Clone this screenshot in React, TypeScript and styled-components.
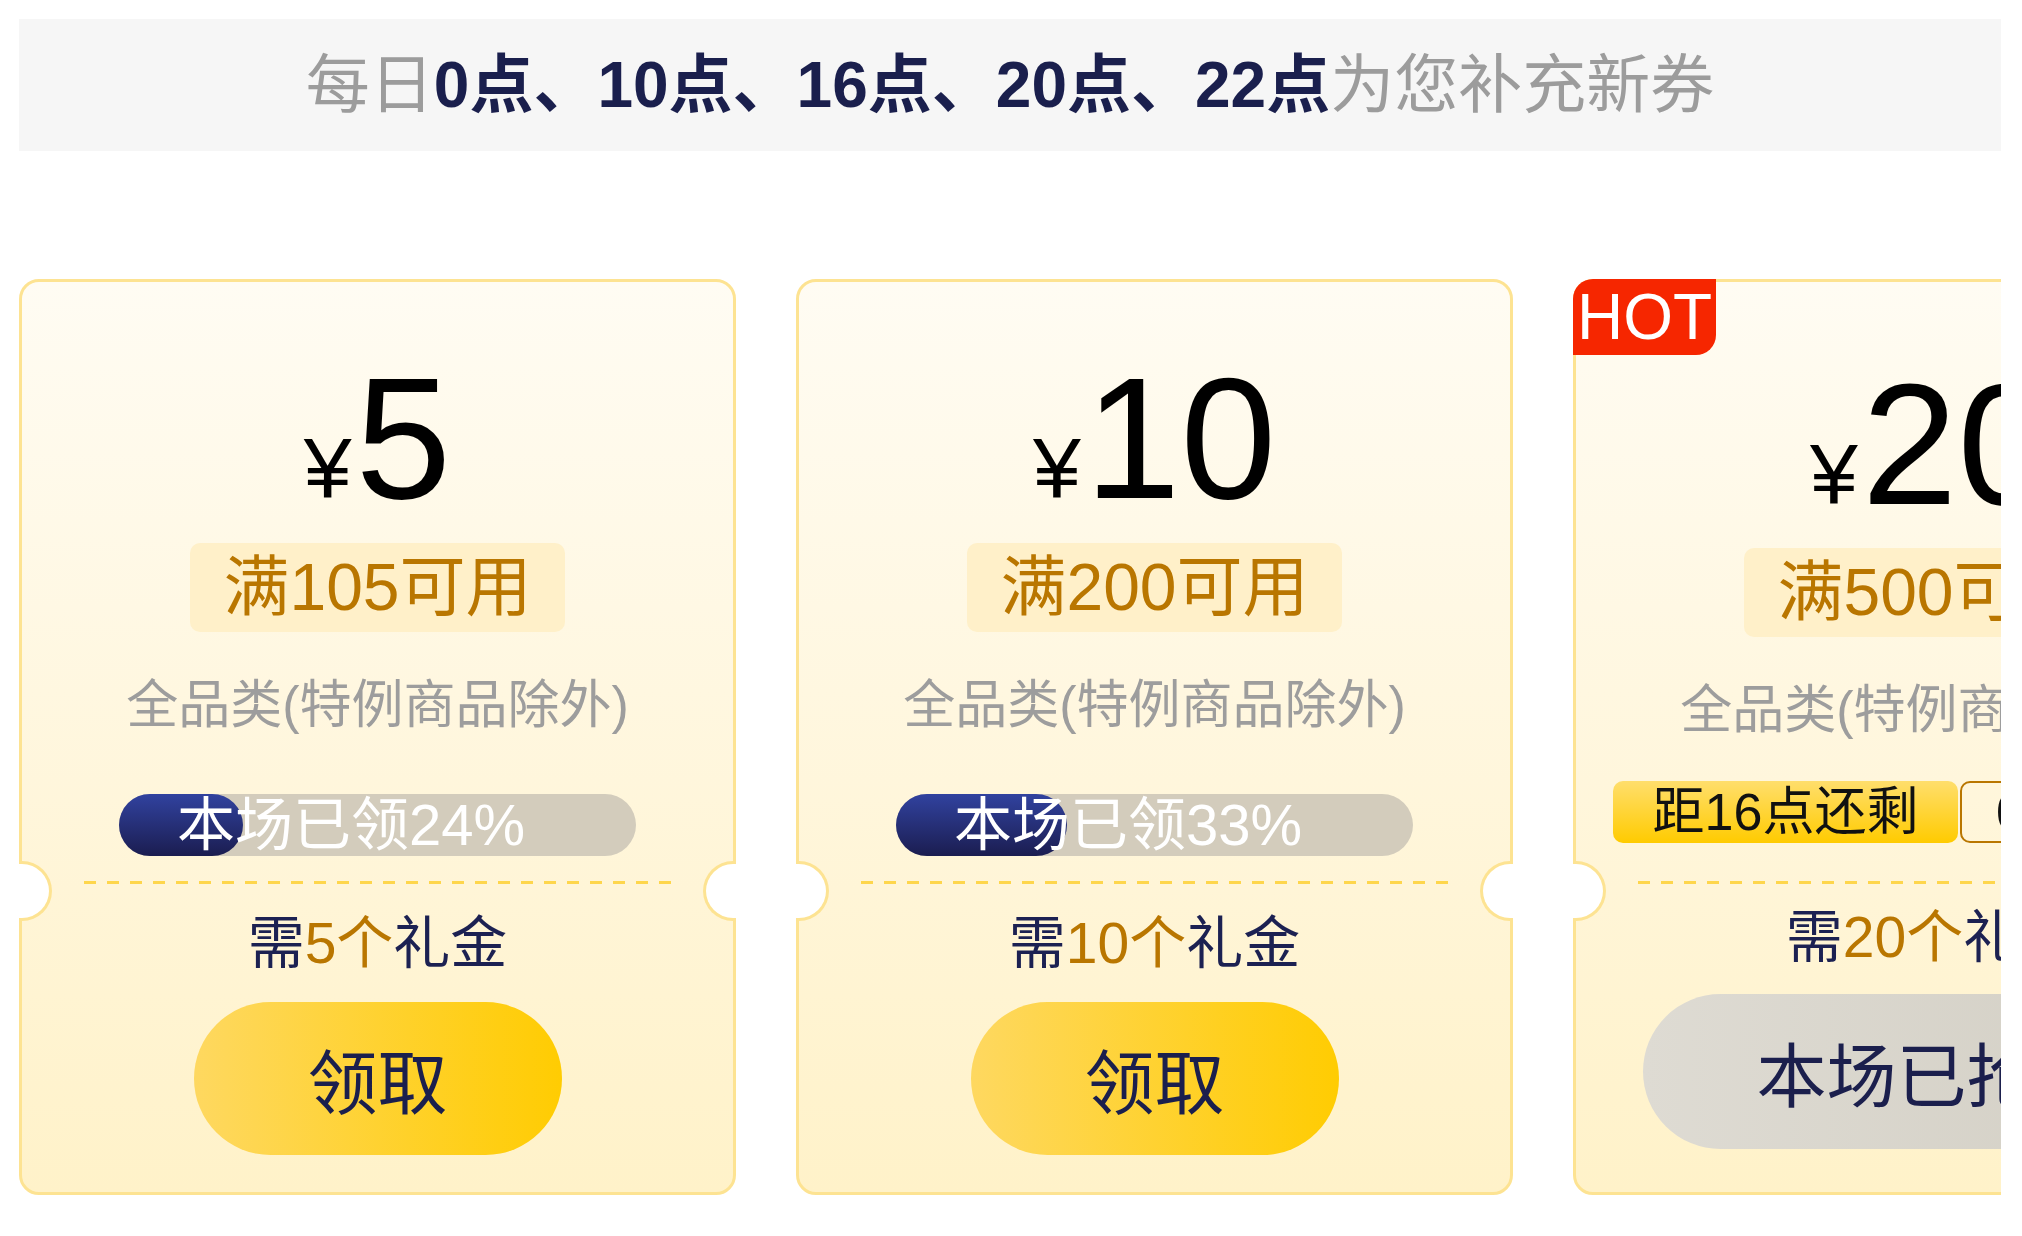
import React from 'react';
import styled, { createGlobalStyle, css } from 'styled-components';

const GlobalStyle = createGlobalStyle`
  html, body {
    margin: 0;
    padding: 0;
    background: #ffffff;
  }
  body {
    font-family: "Liberation Sans", "Noto Sans CJK SC", sans-serif;
  }
`;

const FONT = `"Liberation Sans", "Noto Sans CJK SC", sans-serif`;
const EDGE = '#fde392';

const Page = styled.div`
  width: 2022px;
  height: 1236px;
  box-sizing: border-box;
  padding: 19px 21px 0 19px;
  overflow: hidden;
  font-family: ${FONT};
`;

const Banner = styled.div`
  height: 132px;
  background: #f6f6f6;
  display: flex;
  align-items: center;
  justify-content: center;
  font-size: 64px;
  line-height: 1;
  color: #9c9c9c;
  white-space: nowrap;
`;

const Strong = styled.span`
  color: #1a1f4d;
  font-weight: 700;
`;

const CardRow = styled.div`
  margin-top: 128px;
  display: flex;
  gap: 60px;
  overflow: hidden;
`;

const Card = styled.div<{ $hot?: boolean }>`
  position: relative;
  flex-shrink: 0;
  width: 717px;
  height: 916px;
  box-sizing: border-box;
  border: 3px solid ${EDGE};
  border-radius: 20px;
  background: linear-gradient(180deg, #fffcf3 0%, #fff7e0 45%, #fff2c9 100%);
  display: flex;
  flex-direction: column;
  align-items: center;
  padding-top: ${(p) => (p.$hot ? '76px' : '70px')};
`;

const Notch = styled.div<{ $side: 'left' | 'right' }>`
  position: absolute;
  top: 579px;
  width: 33px;
  height: 60px;
  box-sizing: border-box;
  background: #ffffff;
  border: 3px solid ${EDGE};
  ${(p) =>
    p.$side === 'left'
      ? css`
          left: -3px;
          border-left: none;
          border-radius: 0 30px 30px 0;
        `
      : css`
          right: -3px;
          border-right: none;
          border-radius: 30px 0 0 30px;
        `}
`;

const HotBadge = styled.div`
  position: absolute;
  top: -3px;
  left: -3px;
  width: 143px;
  height: 76px;
  background: #f62600;
  border-radius: 20px 0 20px 0;
  color: #ffffff;
  font-size: 64px;
  line-height: 76px;
  text-align: center;
`;

const Amount = styled.div`
  display: flex;
  align-items: baseline;
  color: #000000;
  font-size: 172px;
  line-height: 172px;
  height: 172px;
`;

const Currency = styled.span`
  font-size: 86px;
  margin-right: 4px;
`;

const Threshold = styled.div<{ $hot?: boolean }>`
  margin-top: ${(p) => (p.$hot ? '18px' : '19px')};
  height: 89px;
  line-height: 89px;
  padding: 0 33px;
  background: #fff0c9;
  border-radius: 10px;
  color: #b97600;
  font-size: 66px;
  white-space: nowrap;
`;

const Scope = styled.div`
  margin-top: 47px;
  height: 52px;
  line-height: 52px;
  font-size: 52px;
  color: #9d9d9d;
  white-space: nowrap;
`;

const Progress = styled.div`
  position: relative;
  margin-top: 63px;
  width: 517px;
  height: 62px;
  border-radius: 31px;
  background: #d3ccbc;
`;

const ProgressFill = styled.div`
  position: absolute;
  left: 0;
  top: 0;
  bottom: 0;
  border-radius: 31px;
  background: linear-gradient(180deg, #31429f 0%, #1b1d50 100%);
`;

const ProgressText = styled.div`
  position: relative;
  padding-left: 58px;
  line-height: 62px;
  font-size: 58px;
  color: #ffffff;
  white-space: nowrap;
`;

const CountdownRow = styled.div`
  margin-top: 45px;
  display: flex;
  gap: 2px;
  align-self: flex-start;
  margin-left: 37px;
`;

const CountdownLabel = styled.div`
  width: 345px;
  height: 62px;
  line-height: 62px;
  text-align: center;
  border-radius: 10px;
  background: linear-gradient(180deg, #ffde6c 0%, #ffcb00 100%);
  color: #111111;
  font-size: 52px;
  white-space: nowrap;
`;

const CountdownTime = styled.div`
  height: 62px;
  box-sizing: border-box;
  line-height: 58px;
  padding: 0 24px 0 34px;
  border: 2px solid #b97600;
  border-radius: 10px;
  color: #111111;
  font-size: 52px;
  white-space: nowrap;
`;

const Divider = styled.div<{ $hot?: boolean }>`
  margin-top: ${(p) => (p.$hot ? '38px' : '25px')};
  width: 588px;
  height: 3px;
  background: repeating-linear-gradient(
    90deg,
    #fed64c 0,
    #fed64c 12px,
    transparent 12px,
    transparent 23px
  );
`;

const Need = styled.div<{ $hot?: boolean }>`
  margin-top: ${(p) => (p.$hot ? '25px' : '31px')};
  height: 56px;
  line-height: 56px;
  font-size: 57px;
  color: #1c2152;
  white-space: nowrap;
`;

const Highlight = styled.span`
  color: #b97600;
`;

const ActionButton = styled.button<{ $gone?: boolean }>`
  margin-top: ${(p) => (p.$gone ? '29px' : '31px')};
  height: ${(p) => (p.$gone ? '155px' : '153px')};
  padding: 0 114px;
  border: none;
  border-radius: 80px;
  font-family: ${FONT};
  font-size: 70px;
  color: #1b1f4d;
  white-space: nowrap;
  cursor: pointer;
  background: ${(p) =>
    p.$gone
      ? 'linear-gradient(90deg, #dedbd3 0%, #d2cec3 100%)'
      : 'linear-gradient(90deg, #fed860 0%, #ffcc02 100%)'};
`;

type Coupon = {
  amount: string;
  min: string;
  need: string;
  pct?: number;
  hot?: boolean;
};

const coupons: Coupon[] = [
  { amount: '5', min: '105', need: '5', pct: 24 },
  { amount: '10', min: '200', need: '10', pct: 33 },
  { amount: '20', min: '500', need: '20', hot: true },
];

const CouponCard: React.FC<{ c: Coupon }> = ({ c }) => (
  <Card $hot={c.hot}>
    {c.hot && <HotBadge>HOT</HotBadge>}
    <Notch $side="left" />
    <Notch $side="right" />
    <Amount>
      <Currency>¥</Currency>
      {c.amount}
    </Amount>
    <Threshold $hot={c.hot}>满{c.min}可用</Threshold>
    <Scope>全品类(特例商品除外)</Scope>
    {c.hot ? (
      <CountdownRow>
        <CountdownLabel>距16点还剩</CountdownLabel>
        <CountdownTime>02:35:18</CountdownTime>
      </CountdownRow>
    ) : (
      <Progress>
        <ProgressFill style={{ width: `${c.pct}%` }} />
        <ProgressText>本场已领{c.pct}%</ProgressText>
      </Progress>
    )}
    <Divider $hot={c.hot} />
    <Need $hot={c.hot}>
      需<Highlight>{c.need}个</Highlight>礼金
    </Need>
    <ActionButton $gone={c.hot}>{c.hot ? '本场已抢光' : '领取'}</ActionButton>
  </Card>
);

export default function App() {
  return (
    <>
      <GlobalStyle />
      <Page>
        <Banner>
          每日<Strong>0点、10点、16点、20点、22点</Strong>为您补充新券
        </Banner>
        <CardRow>
          {coupons.map((c) => (
            <CouponCard key={c.amount} c={c} />
          ))}
        </CardRow>
      </Page>
    </>
  );
}
